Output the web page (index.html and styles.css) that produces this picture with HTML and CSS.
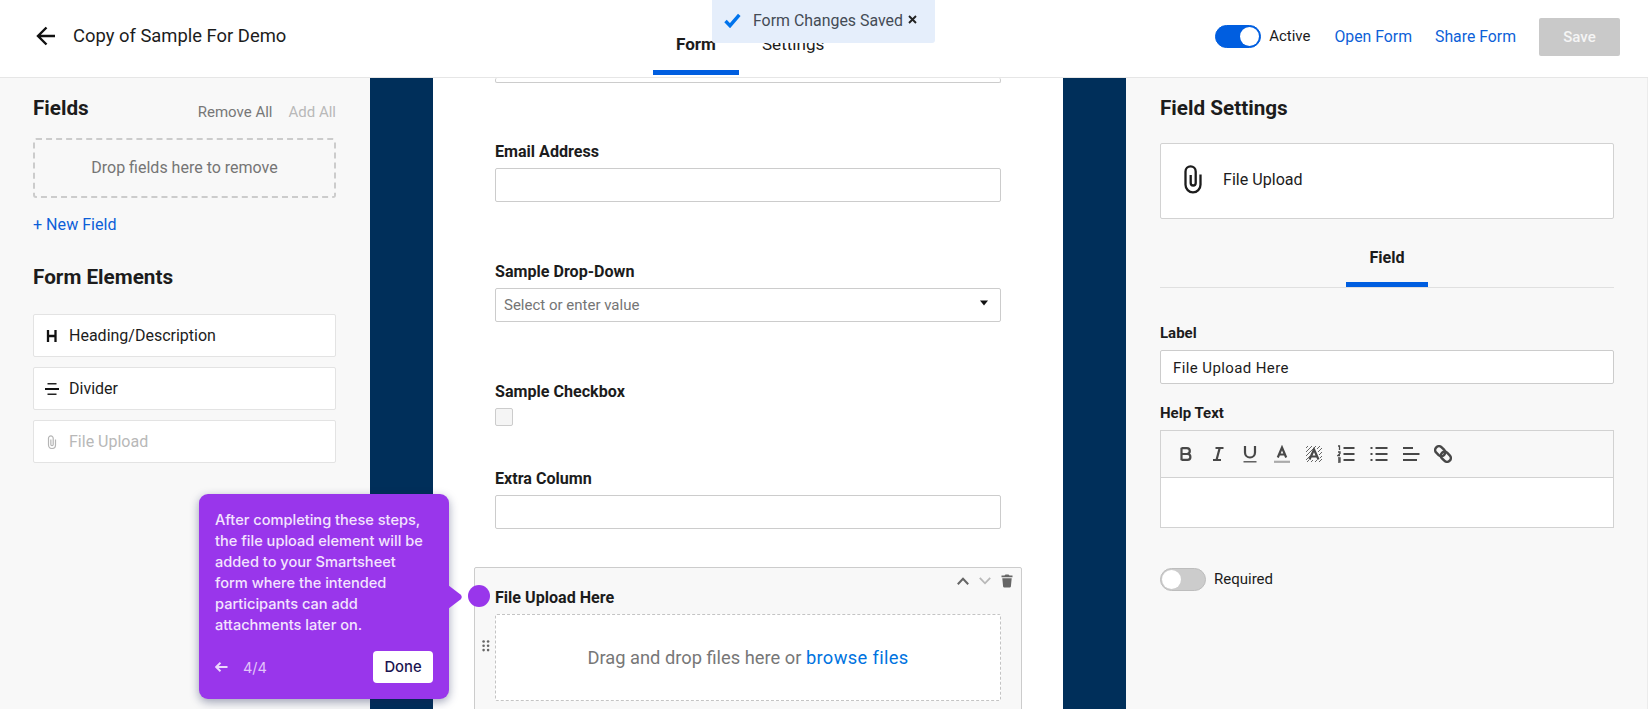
FILE: index.html
```
<!DOCTYPE html>
<html lang="en">
<head>
    <meta charset="UTF-8">
    <meta name="viewport" content="width=device-width, initial-scale=1.0">
    <title>Copy of Sample For Demo</title>
    <link rel="stylesheet" href="styles.css">
</head>
<body>
    <header class="topbar">
        <div class="topbar-left">
            <svg class="back-icon" width="20" height="20" viewBox="0 0 20 20"><path d="M19 10H2M10.5 1.5L2 10l8.5 8.5" fill="none" stroke="#111" stroke-width="2.4"/></svg>
            <h1>Copy of Sample For Demo</h1>
        </div>
        <nav class="tabs">
            <a class="tab active">Form</a>
            <a class="tab">Settings</a>
        </nav>
        <div class="topbar-right">
            <span class="toggle on"></span>
            <span class="toggle-label">Active</span>
            <a class="link open-link">Open Form</a>
            <a class="link share-link">Share Form</a>
            <button class="save-btn">Save</button>
        </div>
    </header>

    <div class="toast">
        <svg width="17" height="15" viewBox="0 0 17 15"><path d="M1.5 8l4.5 4.7L15.3 1.8" fill="none" stroke="#0073ec" stroke-width="3.4"/></svg>
        <span class="toast-text">Form Changes Saved</span>
        <svg class="toast-close" width="9" height="9" viewBox="0 0 9 9"><path d="M1 1l7 7M8 1L1 8" stroke="#222" stroke-width="1.9"/></svg>
    </div>

    <main class="workspace">
        <aside class="fields-panel">
            <div class="panel-head">
                <h2>Fields</h2>
                <div class="bulk-actions">
                    <span>Remove All</span>
                    <span class="muted">Add All</span>
                </div>
            </div>
            <div class="remove-zone">Drop fields here to remove</div>
            <a class="link new-field">+ New Field</a>
            <h2 class="elements-title">Form Elements</h2>
            <ul class="elements">
                <li>
                    <svg width="14" height="14" viewBox="0 0 14 14"><path d="M3 1v12M10.5 1v12M3 7h8" stroke="#111" stroke-width="2.3"/></svg>
                    Heading/Description
                </li>
                <li>
                    <svg width="14" height="14" viewBox="0 0 14 14"><path d="M2.5 1.8h9M2.5 12.2h9" stroke="#222" stroke-width="1.4"/><path d="M0 7h14" stroke="#111" stroke-width="2"/></svg>
                    Divider
                </li>
                <li class="disabled">
                    <svg width="14" height="14" viewBox="0 0 16 28"><path d="M15 9v11a7 7 0 0 1-14 0V6.5a4.7 4.7 0 0 1 9.4 0V19a2.3 2.3 0 0 1-4.7 0V9" fill="none" stroke="#b5b5b5" stroke-width="2.4"/></svg>
                    File Upload
                </li>
            </ul>
        </aside>

        <section class="canvas">
            <div class="form-page">
                <div class="input input-cut"></div>
                <div class="field">
                    <label>Email Address</label>
                    <div class="input"></div>
                </div>
                <div class="field">
                    <label>Sample Drop-Down</label>
                    <div class="input select">
                        <span>Select or enter value</span>
                        <svg width="8" height="6" viewBox="0 0 8 6"><path d="M0 .5h8L4 5.5z" fill="#111"/></svg>
                    </div>
                </div>
                <div class="field checkbox-field">
                    <label>Sample Checkbox</label>
                    <div class="checkbox"></div>
                </div>
                <div class="field extra-field">
                    <label>Extra Column</label>
                    <div class="input"></div>
                </div>
                <div class="upload-field">
                    <div class="field-tools">
                        <svg width="12" height="8" viewBox="0 0 12 8"><path d="M.8 7.2L6 1.7l5.2 5.5" fill="none" stroke="#666" stroke-width="2"/></svg>
                        <svg width="12" height="8" viewBox="0 0 12 8"><path d="M.8 .8L6 6.3 11.2 .8" fill="none" stroke="#b8b8b8" stroke-width="1.8"/></svg>
                        <svg width="12" height="14" viewBox="0 0 12 14"><path d="M.5 1.5h3l1-1h3l1 1h3v1.7H.5zM1.3 4.2h9.4L9.9 12.5q-.2 1-1.200 1H3.3q-1 0-1.200-1z" fill="#666"/></svg>
                    </div>
                    <label>File Upload Here</label>
                    <div class="upload-row">
                        <svg class="drag-handle" width="8" height="12" viewBox="0 0 8 12" fill="#666"><circle cx="1.6" cy="1.5" r="1.3"/><circle cx="6.1" cy="1.5" r="1.3"/><circle cx="1.6" cy="5.8" r="1.3"/><circle cx="6.1" cy="5.8" r="1.3"/><circle cx="1.6" cy="10.1" r="1.3"/><circle cx="6.1" cy="10.1" r="1.3"/></svg>
                        <div class="file-zone">
                            <span>Drag and drop files here or <a>browse files</a></span>
                        </div>
                    </div>
                </div>
            </div>
        </section>

        <aside class="settings-panel">
            <h2>Field Settings</h2>
            <div class="field-card">
                <svg width="18" height="29" viewBox="0 0 18 29"><path d="M16.5 9.5v10.3a7.5 7.5 0 0 1-15 0V6.5a5 5 0 0 1 10.2 0V18a2.5 2.5 0 0 1-5 0V10" fill="none" stroke="#1c1c1c" stroke-width="2.3"/></svg>
                File Upload
            </div>
            <div class="sub-tabs"><span class="sub-tab">Field</span></div>
            <label class="small-label">Label</label>
            <div class="input label-input">File Upload Here</div>
            <label class="small-label help-label">Help Text</label>
            <div class="editor">
                <div class="toolbar">
                    <svg viewBox="0 0 18 18"><path d="M4.5 2.7v12.6M4.5 3.2h5.4a2.9 2.9 0 0 1 0 5.8H4.5M9 9h1.5a2.9 2.9 0 0 1 0 5.8h-6" class="st"/></svg>
                    <svg viewBox="0 0 18 18"><path d="M6.5 3h8M4 15h8M10.7 3L7.5 15" class="st"/></svg>
                    <svg viewBox="0 0 18 18"><path d="M4 1v6.5a5 5 0 0 0 10 0V1" class="st"/><path d="M2.5 16.8h13" class="st thin"/></svg>
                    <svg viewBox="0 0 18 18"><path d="M4.8 12.5L9 2.5l4.2 10M6.2 9.5h5.6" class="st"/><path d="M1 16.8h16" class="st pale"/></svg>
                    <svg viewBox="0 0 18 18"><path d="M1 3l2-2M1 7l6-6M1 11l10-10M1 15l4-4M12 4l3-3M13 7l4-4M14 10l3-3M15 13l2-2M2 17l2-2M6 17l2-2M10 17l2-2M14 17l3-3" stroke="#666" stroke-width="1" fill="none"/><path d="M4 15L9 4.5 14 15z" fill="#f8f8f8"/><path d="M4.5 14.5L9 4.5l4.5 10M6.2 11.5h5.6" class="st"/></svg>
                    <svg viewBox="0 0 18 18"><path d="M6.5 3h11M6.5 9h11M6.5 15h11" class="st"/><path d="M1 1h1.5v4M1 7h2v1.5l-2 2h2M1 13h2v4H1M1 15h2" class="st thin"/></svg>
                    <svg viewBox="0 0 18 18"><path d="M5.5 3h12M5.5 9h12M5.5 15h12M.5 3h2M.5 9h2M.5 15h2" class="st"/></svg>
                    <svg viewBox="0 0 18 18"><path d="M1 3h10M1 9h16.5M1 15h14" class="st"/></svg>
                    <svg viewBox="0 0 18 18"><g transform="rotate(45 9 9)"><rect x="-.5" y="5.2" width="11" height="7.6" rx="3.8" class="st bold"/><rect x="7.5" y="5.2" width="11" height="7.6" rx="3.8" class="st bold"/></g></svg>
                </div>
                <div class="editor-body"></div>
            </div>
            <div class="required-row">
                <span class="toggle"></span>
                <span class="toggle-label">Required</span>
            </div>
        </aside>
    </main>

    <div class="tour">
        <p>After completing these steps,<br>the file upload element will be<br>added to your Smartsheet<br>form where the intended<br>participants can add<br>attachments later on.</p>
        <div class="tour-footer">
            <svg width="13" height="10" viewBox="0 0 13 10"><path d="M12.5 5H1.5M5.5 .8L1.2 5l4.3 4.2" fill="none" stroke="#ecd9fc" stroke-width="1.9"/></svg>
            <span class="tour-step">4/4</span>
            <button class="tour-done">Done</button>
        </div>
        <svg class="tour-arrow" width="15" height="24" viewBox="0 0 15 24"><path d="M0 0l12.5 9.5q2.5 2.5 0 5L0 24z" fill="#9936eb"/></svg>
        <span class="tour-dot"></span>
    </div>
</body>
</html>
```
FILE: styles.css
```
* {
    box-sizing: border-box;
    margin: 0;
    padding: 0;
}

body {
    display: flex;
    flex-direction: column;
    height: 100vh;
    overflow: hidden;
    font-family: Roboto, sans-serif;
    font-size: 16.1px;
    line-height: 21px;
    color: #1c1c1c;
    background: #fff;
}

h2 {
    font-size: 20.7px;
    line-height: 26px;
    font-weight: 700;
}

button {
    border: none;
    font-family: inherit;
}

label {
    display: block;
    font-weight: 700;
    margin-bottom: 6px;
}

.link {
    color: #0d5fd8;
}

/* Top bar */
.topbar {
    display: grid;
    grid-template-columns: 653px 1fr auto;
    flex: none;
    height: 78px;
    padding-right: 28px;
    border-bottom: 1px solid #e6e6e6;
}

.topbar-left {
    display: flex;
    align-items: center;
    gap: 17px;
    padding-left: 36px;
    padding-bottom: 6px;
}

h1 {
    font-size: 18.4px;
    font-weight: 400;
}

.tabs {
    display: flex;
    align-items: flex-end;
    padding-bottom: 2px;
}

.tab {
    height: 41px;
    padding: 0 23px;
    font-size: 17.1px;
    border-bottom: 5px solid transparent;
}

.tab.active {
    font-weight: 700;
    border-bottom-color: #005ee0;
}

.topbar-right {
    display: flex;
    align-items: center;
    padding-bottom: 4px;
}

.topbar-right .link {
    font-size: 15.8px;
}

.toggle {
    display: flex;
    align-items: center;
    width: 46px;
    height: 23px;
    padding: 1px;
    border-radius: 12px;
    background: #ccc;
    border: 1px solid #bdbdbd;
}

.toggle::before {
    content: "";
    width: 19px;
    height: 19px;
    border-radius: 50%;
    background: #fff;
}

.toggle.on {
    justify-content: flex-end;
    background: #005ee0;
    border-color: #005ee0;
}

.toggle-label {
    font-size: 15px;
    margin-left: 8px;
}

.open-link {
    margin-left: 24px;
}

.share-link {
    margin-left: 23px;
}

.save-btn {
    width: 81px;
    height: 38px;
    margin-left: 23px;
    border-radius: 2px;
    background: #c9c9c9;
    color: #f5f5f5;
    font-size: 15px;
    font-weight: 500;
}

.toast {
    position: absolute;
    left: 712px;
    top: 0;
    display: flex;
    align-items: center;
    width: 223px;
    height: 43px;
    padding: 0 12px 2px;
    border-radius: 0 0 3px 3px;
    background: #e5eefb;
    color: #444b55;
    font-size: 15.9px;
    white-space: nowrap;
}

.toast-text {
    margin-left: 12px;
}

.toast-close {
    margin-left: 5px;
    margin-bottom: 2px;
}

.workspace {
    display: grid;
    grid-template-columns: 370px 756px 522px;
    flex: 1;
    min-height: 0;
}

/* Left panel */
.fields-panel {
    padding: 17px 34px 0 33px;
    background: #f8f8f8;
}

.panel-head {
    display: flex;
    justify-content: space-between;
}

.bulk-actions {
    display: flex;
    gap: 16px;
    padding-top: 7px;
    font-size: 15px;
    color: #777;
}

.bulk-actions .muted {
    color: #b9b9b9;
}

.remove-zone {
    height: 60px;
    margin-top: 15px;
    border: 2px dashed #ccc;
    border-radius: 3px;
    line-height: 55px;
    text-align: center;
    color: #757575;
    font-size: 16px;
}

.new-field {
    display: block;
    margin-top: 16px;
}

.elements-title {
    margin-top: 29px;
}

.elements {
    display: grid;
    gap: 10px;
    margin-top: 24px;
    list-style: none;
}

.elements li {
    display: flex;
    align-items: center;
    gap: 10px;
    height: 43px;
    padding-left: 11px;
    border: 1px solid #e3e3e3;
    border-radius: 2px;
    background: #fff;
    font-size: 16px;
}

.elements .disabled {
    color: #b8b8b8;
}

/* Form preview */
.canvas {
    display: flex;
    min-height: 0;
    overflow: hidden;
    padding: 0 63px;
    background: #002f5a;
}

.form-page {
    flex: 1;
    padding: 0 62px;
    background: #fff;
}

.input {
    height: 34px;
    border: 1px solid #ccc;
    border-radius: 2px;
    background: #fff;
}

.input-cut {
    height: 5px;
    border-top: none;
    margin-bottom: 58px;
}

.field {
    margin-bottom: 59px;
}

.select {
    display: flex;
    align-items: center;
    justify-content: space-between;
    padding: 0 12px 0 8px;
    font-size: 15px;
    color: #757575;
}

.select svg {
    margin-bottom: 4px;
}

.checkbox-field {
    margin-bottom: 42px;
}

.checkbox {
    width: 18px;
    height: 18px;
    border: 1px solid #ccc;
    border-radius: 2px;
    background: #f5f5f5;
}

.extra-field {
    margin-bottom: 38px;
}

.upload-field {
    height: 200px;
    margin: 0 -21px;
    padding: 7px 8px 0 5px;
    border: 1px solid #ccc;
    border-radius: 2px;
    background: #f8f8f8;
}

.upload-field label {
    margin: 0 0 6px 15px;
}

.field-tools {
    display: flex;
    align-items: center;
    justify-content: flex-end;
    gap: 10px;
    height: 12px;
}

.upload-row {
    display: flex;
    padding-right: 12px;
}

.drag-handle {
    margin: 26px 5px 0 2px;
}

.file-zone {
    flex: 1;
    height: 87px;
    border: 1px dashed #c4c4c4;
    border-radius: 2px;
    background: #fff;
    font-size: 18.3px;
    line-height: 85px;
    text-align: center;
    color: #777;
}

.file-zone a {
    color: #0073e0;
    letter-spacing: 0.35px;
}

/* Right panel */
.settings-panel {
    padding: 17px 33px 0 34px;
    background: #f8f8f8;
    border-right: 1px solid #ececec;
}

.field-card {
    display: flex;
    align-items: center;
    gap: 21px;
    height: 76px;
    margin-top: 22px;
    padding: 0 0 4px 23px;
    border: 1px solid #d2d2d2;
    border-radius: 2px;
    background: #fff;
}

.sub-tabs {
    display: flex;
    justify-content: center;
    height: 69px;
    border-bottom: 1px solid #e0e0e0;
}

.sub-tab {
    width: 82px;
    padding-top: 28px;
    border-bottom: 5px solid #005ee0;
    text-align: center;
    font-weight: 700;
}

.small-label {
    font-size: 15px;
    margin-top: 35px;
}

.label-input {
    padding-left: 12px;
    font-size: 15px;
    line-height: 34px;
    letter-spacing: 0.4px;
}

.help-label {
    margin-top: 19px;
}

.editor {
    border: 1px solid #d2d2d2;
}

.toolbar {
    display: flex;
    align-items: center;
    gap: 14.1px;
    height: 47px;
    padding-left: 16px;
    border-bottom: 1px solid #d2d2d2;
}

.toolbar svg {
    width: 18px;
    height: 18px;
}

.toolbar .st {
    fill: none;
    stroke: #484848;
    stroke-width: 2.2;
}

.toolbar .thin {
    stroke-width: 1.3;
}

.toolbar .pale {
    stroke: #aaa;
}

.toolbar .bold {
    stroke-width: 2.5;
}

.editor-body {
    height: 49px;
    background: #fff;
}

.required-row {
    display: flex;
    align-items: center;
    margin-top: 40px;
}

/* Walkthrough popup */
.tour {
    position: absolute;
    left: 199px;
    top: 494px;
    width: 250px;
    height: 205px;
    padding: 16px 16px 15px;
    border-radius: 9px;
    background: #9936eb;
    box-shadow: 0 3px 10px rgba(20, 30, 80, 0.4);
    font-family: Inter, sans-serif;
    color: #f3e4fe;
}

.tour p {
    font-size: 14.6px;
    font-weight: 500;
    white-space: nowrap;
}

.tour-footer {
    display: flex;
    align-items: center;
    margin-top: 15px;
}

.tour-step {
    margin-left: 15px;
    font-size: 14.5px;
    color: #e2c5fa;
}

.tour-done {
    width: 60px;
    height: 32px;
    margin-left: auto;
    border-radius: 4px;
    background: #fff;
    font-size: 14.8px;
    font-weight: 500;
    color: #1b1450;
}

.tour-arrow {
    position: absolute;
    left: 249px;
    top: 91px;
}

.tour-dot {
    position: absolute;
    left: 269px;
    top: 91px;
    width: 22px;
    height: 22px;
    border-radius: 50%;
    background: #9936eb;
}
```
